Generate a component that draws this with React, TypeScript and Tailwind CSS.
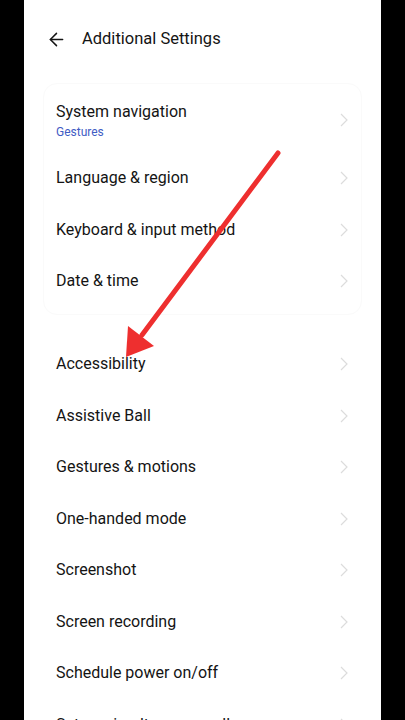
import React from 'react';
import { ArrowLeft } from 'lucide-react';

const groupOne = ['Language & region', 'Keyboard & input method', 'Date & time'];

const groupTwo = [
  'Accessibility',
  'Assistive Ball',
  'Gestures & motions',
  'One-handed mode',
  'Screenshot',
  'Screen recording',
  'Schedule power on/off',
  'Set up simultaneous calls',
];

function Chevron() {
  return (
    <svg width="8" height="14" viewBox="0 0 8 14" className="shrink-0">
      <polyline points="1,1 7,7 1,13" fill="none" stroke="#dcdcdc" strokeWidth="1.2" />
    </svg>
  );
}

function Row({ label, inset }: { label: string; inset?: boolean }) {
  return (
    <div
      className={
        inset
          ? 'h-[51.5px] flex items-center justify-between pl-[12px] pr-[13px]'
          : 'h-[51.5px] flex items-center justify-between pl-[32px] pr-[33px]'
      }
    >
      <span className="text-[16px] text-[#141414]">{label}</span>
      <Chevron />
    </div>
  );
}

export default function App() {
  return (
    <div
      className="relative w-[405px] h-[720px] bg-black flex justify-center overflow-hidden"
      style={{ fontFamily: 'Roboto, "Noto Sans", sans-serif' }}
    >
      <div className="w-[357px] h-full bg-white flex flex-col">
        {/* header */}
        <div className="h-[78px] shrink-0 flex items-center pl-[22px] gap-[15px]">
          <ArrowLeft size={21} strokeWidth={1.7} className="text-[#141414]" />
          <h1 className="text-[16.5px] text-[#141414]">Additional Settings</h1>
        </div>

        {/* first group */}
        <div className="mt-[5px] mx-[19px] pb-[7px] rounded-[14px] border border-[#fafafa] shrink-0">
          <div className="h-[68.25px] pt-[4px] flex items-center justify-between pl-[12px] pr-[13px]">
            <div className="flex flex-col gap-[3px]">
              <span className="text-[16px] leading-[20px] text-[#141414]">System navigation</span>
              <span className="text-[12px] leading-[14px] text-[#3f5cc4]">Gestures</span>
            </div>
            <Chevron />
          </div>
          {groupOne.map((label) => (
            <Row key={label} label={label} inset />
          ))}
        </div>

        {/* second group */}
        <div className="mt-[23.5px] shrink-0">
          {groupTwo.map((label) => (
            <Row key={label} label={label} />
          ))}
        </div>
      </div>

      {/* red annotation arrow */}
      <svg className="absolute inset-0 pointer-events-none" width="405" height="720" viewBox="0 0 405 720">
        <line x1="278" y1="153" x2="142" y2="335" stroke="#ee2f2f" strokeWidth="5" strokeLinecap="round" />
        <polygon points="126,357 128,326 154,346" fill="#ee2f2f" />
      </svg>
    </div>
  );
}
